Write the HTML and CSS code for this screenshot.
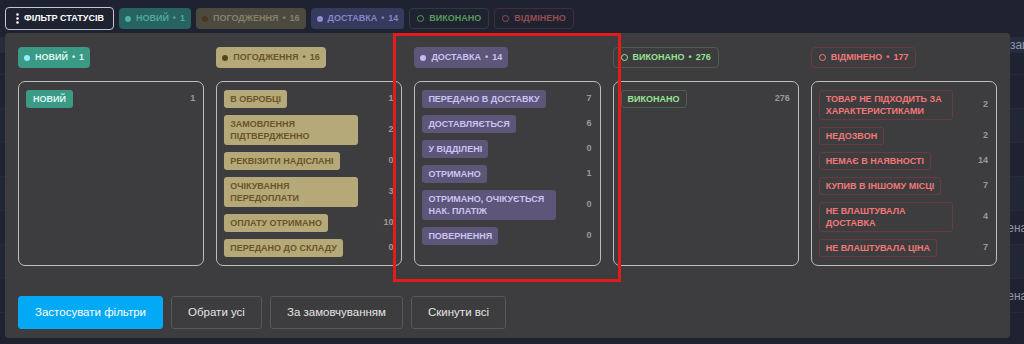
FILE: index.html
```html
<!DOCTYPE html>
<html lang="uk">
<head>
<meta charset="utf-8">
<title>Фільтр статусів</title>
<link rel="stylesheet" href="styles.css">
</head>
<body>
<div class="page">
  <div class="toolbar">
    <button class="filter-btn">
      <svg class="kebab" width="3" height="11" viewBox="0 0 3 11"><circle cx="1.5" cy="1.5" r="1.3" fill="#fff"/><circle cx="1.5" cy="5.5" r="1.3" fill="#fff"/><circle cx="1.5" cy="9.5" r="1.3" fill="#fff"/></svg>
      <span>Фільтр статусів</span>
    </button>
    <span class="chip bar teal"><i class="dot"></i>Новий<b class="sep">•</b>1</span>
    <span class="chip bar tan"><i class="dot"></i>Погодження<b class="sep">•</b>16</span>
    <span class="chip bar purple"><i class="dot"></i>Доставка<b class="sep">•</b>14</span>
    <span class="chip bar green"><i class="ring"></i>Виконано</span>
    <span class="chip bar red"><i class="ring"></i>Відмінено</span>
  </div>

  <div class="table">
    <div class="trow head"><span class="cell first">Перевірка завершена</span></div>
    <div class="trow short"></div>
    <div class="trow"></div>
    <div class="trow alt"></div>
    <div class="trow"></div>
    <div class="trow alt"></div>
    <div class="trow"><span class="cell">Відмінена</span></div>
    <div class="trow alt"></div>
    <div class="trow"><span class="cell">Відмінена</span></div>
  </div>

  <div class="dropdown">
    <div class="columns">
      <div class="column">
        <span class="chip teal"><i class="dot"></i>Новий<b class="sep">•</b>1</span>
        <div class="card">
          <div class="row"><span class="tag teal">Новий</span><span class="count">1</span></div>
        </div>
      </div>
      <div class="column">
        <span class="chip tan"><i class="dot"></i>Погодження<b class="sep">•</b>16</span>
        <div class="card">
          <div class="row"><span class="tag tan">В обробці</span><span class="count">1</span></div>
          <div class="row"><span class="tag tan">Замовлення підтвердженно</span><span class="count">2</span></div>
          <div class="row"><span class="tag tan">Реквізити надіслані</span><span class="count">0</span></div>
          <div class="row"><span class="tag tan">Очікування передоплати</span><span class="count">3</span></div>
          <div class="row"><span class="tag tan">Оплату отримано</span><span class="count">10</span></div>
          <div class="row"><span class="tag tan">Передано до складу</span><span class="count">0</span></div>
        </div>
      </div>
      <div class="column">
        <span class="chip purple"><i class="dot"></i>Доставка<b class="sep">•</b>14</span>
        <div class="card">
          <div class="row"><span class="tag purple">Передано в доставку</span><span class="count">7</span></div>
          <div class="row"><span class="tag purple">Доставляється</span><span class="count">6</span></div>
          <div class="row"><span class="tag purple">У відділені</span><span class="count">0</span></div>
          <div class="row"><span class="tag purple">Отримано</span><span class="count">1</span></div>
          <div class="row"><span class="tag purple">Отримано, очікується нак. платіж</span><span class="count">0</span></div>
          <div class="row"><span class="tag purple">Повернення</span><span class="count">0</span></div>
        </div>
      </div>
      <div class="column">
        <span class="chip green"><i class="ring"></i>Виконано<b class="sep">•</b>276</span>
        <div class="card">
          <div class="row"><span class="tag green">Виконано</span><span class="count">276</span></div>
        </div>
      </div>
      <div class="column">
        <span class="chip red"><i class="ring"></i>Відмінено<b class="sep">•</b>177</span>
        <div class="card">
          <div class="row"><span class="tag red">Товар не підходить за характеристиками</span><span class="count">2</span></div>
          <div class="row"><span class="tag red">Недозвон</span><span class="count">2</span></div>
          <div class="row"><span class="tag red">Немає в наявності</span><span class="count">14</span></div>
          <div class="row"><span class="tag red">Купив в іншому місці</span><span class="count">7</span></div>
          <div class="row"><span class="tag red">Не влаштувала доставка</span><span class="count">4</span></div>
          <div class="row"><span class="tag red">Не влаштувала ціна</span><span class="count">7</span></div>
        </div>
      </div>
    </div>
    <div class="actions">
      <button class="btn primary">Застосувати фільтри</button>
      <button class="btn">Обрати усі</button>
      <button class="btn">За замовчуванням</button>
      <button class="btn">Скинути всі</button>
    </div>
  </div>

  <div class="annotation"></div>
</div>
</body>
</html>
```

FILE: styles.css
```css
* { box-sizing: border-box; }
html, body { margin: 0; padding: 0; }
body {
  width: 1024px;
  height: 344px;
  overflow: hidden;
  background: #1f2331;
  font-family: "Liberation Sans", Arial, sans-serif;
}
.page {
  position: relative;
  width: 1024px;
  height: 344px;
  overflow: hidden;
}

/* toolbar */
.toolbar {
  display: flex;
  align-items: center;
  gap: 5px;
  height: 37px;
  padding: 0 5px;
}
.filter-btn {
  display: flex;
  align-items: center;
  gap: 5px;
  height: 23px;
  padding: 0 9px 0 10px;
  border: 1.5px solid #c4c7d0;
  border-radius: 4px;
  background: transparent;
  color: #ffffff;
  font: 700 9px/1 "Liberation Sans", Arial, sans-serif;
  text-transform: uppercase;
}
.kebab { display: block; }

/* chips */
.chip {
  display: inline-flex;
  align-items: center;
  gap: 5px;
  height: 21px;
  padding: 0 6px;
  border-radius: 4px;
  font: 700 9px/1 "Liberation Sans", Arial, sans-serif;
  text-transform: uppercase;
  white-space: nowrap;
}
.sep {
  font-weight: 700;
  margin: 0 -1px;
}
.dot {
  width: 6px;
  height: 6px;
  border-radius: 50%;
  background: currentColor;
}
.ring {
  width: 7px;
  height: 7px;
  border-radius: 50%;
  border: 1.3px solid currentColor;
}
.chip.teal { background: #3a9a85; color: #dcf5ef; }
.chip.teal .dot { background: #8eeeff; }
.chip.tan { background: #b6a979; color: #6a5527; }
.chip.tan .dot { background: #57421f; }
.chip.purple { background: #5d5678; color: #cbc3f3; }
.chip.purple .dot { background: #c3bbf8; }
.chip.green { border: 1px solid #4b5f4b; color: #93e28e; padding: 0 7px; }
.chip.red { border: 1px solid #6b3a3c; color: #f47777; padding: 0 7px; }

.chip.bar.teal { background: #276360; color: #4fa79b; }
.chip.bar.teal .dot { background: #4fb0a8; }
.chip.bar.tan { background: #4c4a3f; color: #85806a; }
.chip.bar.tan .dot { background: #4a3522; }
.chip.bar.purple { background: #363a5c; color: #8884c8; }
.chip.bar.purple .dot { background: #918bd8; }
.chip.bar.green { border-color: #2e3c3b; color: #57985a; }
.chip.bar.red { border-color: #482c35; color: #9a4a4c; }

/* table behind the dropdown */
.table {
  display: flex;
  flex-direction: column;
}
.trow {
  height: 34px;
  display: flex;
  align-items: center;
  border-bottom: 1px solid #262b39;
  color: #8f98ab;
  font: 12px "Liberation Sans", Arial, sans-serif;
  white-space: nowrap;
}
.trow.head { height: 16px; background: #262c3b; }
.trow.short { height: 22px; }
.trow.alt { background: #222735; }
.cell { padding-left: 972px; }
.cell.first { padding-left: 950px; }

/* dropdown panel */
.dropdown {
  position: absolute;
  left: 5px;
  top: 33px;
  width: 1005px;
  height: 305px;
  background: #3d3d3f;
  border-radius: 4px;
  padding: 14px 13px 10px;
  display: flex;
  flex-direction: column;
}
.columns {
  display: grid;
  grid-template-columns: repeat(5, 1fr);
  gap: 12px;
}
.column {
  display: flex;
  flex-direction: column;
  align-items: flex-start;
  gap: 13px;
}
.card {
  align-self: stretch;
  flex: 1;
  border: 1.5px solid #bcbcbc;
  border-radius: 7px;
  padding: 7.5px 7px 8px 7px;
  display: flex;
  flex-direction: column;
  gap: 7px;
}
.row {
  display: flex;
  align-items: center;
  justify-content: space-between;
  gap: 6px;
}
.tag {
  max-width: 134px;
  padding: 3px 6px;
  border-radius: 3px;
  font: 700 9px/12px "Liberation Sans", Arial, sans-serif;
  text-transform: uppercase;
}
.tag.teal { background: #3a9a85; color: #dcf5ef; padding: 3px 7px; }
.tag.tan { background: #b6a979; color: #6a5527; }
.tag.purple { background: #5d5678; color: #cbc3f3; }
.tag.green { border: 1px solid #4b5f4b; color: #97e592; padding: 2px 6px; }
.tag.red { border: 1px solid #6b3a3c; color: #f47777; padding: 2px 6px; }
.count {
  font: 700 9px/1 "Liberation Sans", Arial, sans-serif;
  color: #9c9a96;
  padding-right: 1px;
}

/* action buttons */
.actions {
  display: flex;
  gap: 8px;
  margin-top: 30px;
}
.btn {
  height: 33px;
  padding: 0 16px;
  border-radius: 3px;
  border: 1px solid #58585b;
  background: transparent;
  color: #e4e4e4;
  font: 11.5px "Liberation Sans", Arial, sans-serif;
}
.btn.primary {
  background: #03a9f4;
  border-color: #03a9f4;
  color: #ffffff;
}

/* red highlight annotation drawn over the screenshot */
.annotation {
  position: absolute;
  left: 393px;
  top: 33px;
  width: 228px;
  height: 249px;
  border: 3px solid #e41b1b;
  pointer-events: none;
}
```
